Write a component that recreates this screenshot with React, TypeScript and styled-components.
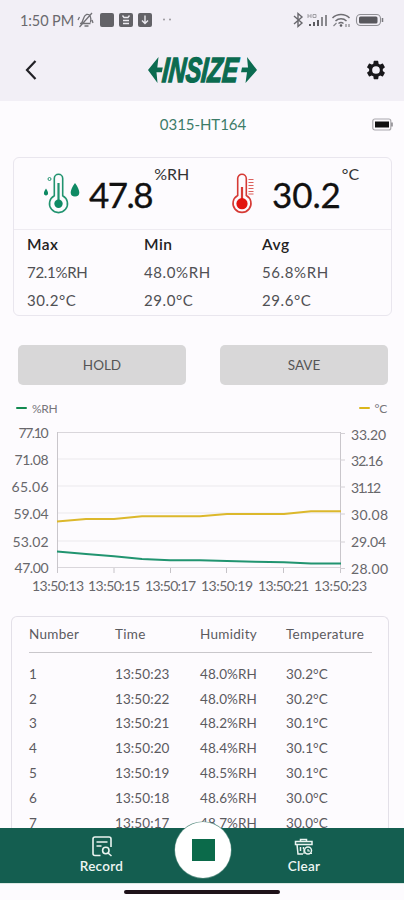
import React from "react";
import styled, { createGlobalStyle } from "styled-components";

const GlobalStyle = createGlobalStyle`
  * { box-sizing: border-box; }
  body { margin: 0; background: #fdfbfe; font-family: Lato, "Noto Sans", sans-serif; }
  button { font: inherit; border: 0; padding: 0; background: none; color: inherit; }
`;

const Screen = styled.div`
  width: 404px;
  height: 900px;
  display: flex;
  flex-direction: column;
  overflow: hidden;
  background: #fdfbfe;
  color: #444;
`;

const TopArea = styled.header`
  height: 101px;
  flex: none;
  background: #f2eff6;
`;

const StatusBar = styled.div`
  height: 40px;
  padding: 0 20px 0 20px;
  display: flex;
  align-items: center;
  justify-content: space-between;
  color: #6a696e;
`;

const StatusGroup = styled.div`
  display: flex;
  align-items: center;
`;

const Clock = styled.span`
  font-size: 14.5px;
  letter-spacing: -0.1px;
  width: 56px;
  white-space: nowrap;
`;

const NavBar = styled.div`
  height: 60px;
  padding: 0 17px 0 21px;
  display: grid;
  grid-template-columns: 20px 1fr 22px;
  align-items: center;
  justify-items: center;
`;

const IconButton = styled.button`
  display: flex;
`;

const LogoSvg = styled.svg`
  overflow: visible;
`;

const DeviceRow = styled.div`
  height: 56px;
  flex: none;
  padding: 0 11px 10px 34px;
  display: grid;
  grid-template-columns: 1fr 21px;
  align-items: center;
`;

const DeviceName = styled.span`
  text-align: center;
  font-size: 15px;
  letter-spacing: -0.05px;
  color: #3c7c68;
`;

const Summary = styled.section`
  flex: none;
  height: 159px;
  margin: 0 12px 0 13px;
  border: 1.5px solid #e9e6ee;
  border-radius: 6px;
`;

const Readings = styled.div`
  height: 72px;
  display: grid;
  grid-template-columns: 188px 1fr;
  border-bottom: 1px solid #eeebf1;
`;

const Reading = styled.div<{ $indent: number }>`
  display: flex;
  align-items: flex-start;
  padding: 14px 0 0 ${(p) => p.$indent}px;
`;

const BigValue = styled.span<{ $before: number; $spacing: number }>`
  margin-left: ${(p) => p.$before}px;
  font-size: 35px;
  line-height: 44px;
  letter-spacing: ${(p) => p.$spacing}px;
  color: #111;
  -webkit-text-stroke: 0.3px #111;
`;

const Unit = styled.span<{ $before: number }>`
  font-size: 16px;
  line-height: 18px;
  margin: -7px 0 0 ${(p) => p.$before}px;
  color: #333;
`;

const Stats = styled.div`
  display: grid;
  grid-template-columns: 117px 118px 1fr;
  padding-left: 13px;
`;

const Stat = styled.div`
  display: flex;
  flex-direction: column;
`;

const StatTitle = styled.span`
  font-size: 15.5px;
  font-weight: 600;
  line-height: 28px;
  letter-spacing: 0.5px;
  color: #222;
`;

const StatValue = styled.span<{ $tight?: boolean }>`
  font-size: 15px;
  line-height: 28px;
  letter-spacing: ${(p) => (p.$tight ? "-0.3px" : "0.6px")};
  color: #505054;
`;

const Actions = styled.div`
  flex: none;
  display: grid;
  grid-template-columns: 168px 168px;
  gap: 34px;
  margin: 29px 0 0 18px;
`;

const ActionButton = styled.button`
  height: 40px;
  border-radius: 5px;
  background: #d8d7d8;
  color: #555;
  font-size: 13.5px;
`;

const Legend = styled.div`
  flex: none;
  height: 20px;
  margin-top: 13px;
  padding: 0 17px 0 16px;
  display: flex;
  justify-content: space-between;
  align-items: center;
`;

const LegendItem = styled.span`
  display: flex;
  align-items: center;
  gap: 5px;
  font-size: 12px;
  letter-spacing: -0.3px;
  color: #77757a;
`;

const Swatch = styled.i<{ $color: string }>`
  width: 11px;
  height: 2px;
  border-radius: 1px;
  background: ${(p) => p.$color};
`;

const ChartSvg = styled.svg`
  flex: none;
  display: block;
  text {
    font-size: 14px;
    fill: #68676b;
  }
`;

const TableCard = styled.section`
  flex: none;
  height: 212px;
  margin: 13px 15px 0 11px;
  padding: 0 16px 0 17px;
  border: 1.5px solid #e3e0e8;
  border-bottom: 0;
  border-radius: 6px 6px 0 0;
  overflow: hidden;
`;

const TableLine = styled.div<{ $head?: boolean }>`
  display: grid;
  grid-template-columns: 86px 85px 86px 1fr;
  align-items: center;
  white-space: nowrap;
  height: ${(p) => (p.$head ? "36px" : "24.8px")};
  padding-bottom: ${(p) => (p.$head ? "1px" : "0")};
  margin-bottom: ${(p) => (p.$head ? "8.5px" : "0")};
  border-bottom: ${(p) => (p.$head ? "1px solid #c9c7cb" : "0")};
  font-size: 13.5px;
  letter-spacing: ${(p) => (p.$head ? "0.3px" : "0.1px")};
  color: #5b5a5e;
`;

const BottomBar = styled.nav`
  flex: none;
  height: 55px;
  display: grid;
  grid-template-columns: 203px 202px;
  background: #145e50;
  position: relative;
`;

const Tab = styled.button`
  display: flex;
  flex-direction: column;
  align-items: center;
  padding-top: 8px;
  color: #eef6f3;
  font-size: 13.5px;
  line-height: 17px;
  letter-spacing: 0.3px;
  font-weight: 600;
  svg { margin-bottom: 1px; }
`;

const StopButton = styled.button`
  position: absolute;
  left: 175px;
  top: -6px;
  width: 56px;
  height: 56px;
  border-radius: 50%;
  background: #fff;
  box-shadow: 0 0 0 0.6px #5e9185;
  display: flex;
  align-items: center;
  justify-content: center;
`;

const StopSquare = styled.i`
  width: 23px;
  height: 22px;
  background: #0b6a4a;
`;

const HomeArea = styled.div`
  flex: 1;
  display: flex;
  justify-content: center;
  padding-top: 6px;
  border-top: 1px solid #dce8e4;
`;

const HomeBar = styled.i`
  width: 156px;
  height: 4px;
  border-radius: 2px;
  background: #1d1019;
`;

const StatusIconsLeft = () => (
  <svg width="98" height="20" viewBox="76 10 98 20" fill="none">
    <g stroke="#727176" strokeWidth="1.3">
      <path d="M80 23.500h10.500M81.500 23c2-2 1.500-7 5-8.500 3.500-.5 5 2 4 8M84.500 26h4M79.500 27 92 13M78 20l1.500-3M92 20l1 3" />
    </g>
    <rect x="100" y="13" width="14" height="14" rx="2" fill="#636267" />
    <rect x="119" y="13" width="14" height="14" rx="2" fill="#636267" />
    <path d="M122.500 15.500l1.500 2h4l1.500-2M123 20.500h6M123 23.500h6" stroke="#eceaf0" strokeWidth="1.300" />
    <rect x="138" y="13" width="14" height="14" rx="2" fill="#636267" />
    <path d="M145 15.500v8M142 20.500l3 3 3-3" stroke="#eceaf0" strokeWidth="1.400" />
    <circle cx="164" cy="19.500" r="1" fill="#99979d" />
    <circle cx="170" cy="19.500" r="1" fill="#99979d" />
  </svg>
);

const StatusIconsRight = () => (
  <svg width="92" height="20" viewBox="292 10 92 20" fill="none">
    <path d="M294 16l8 7-4 3.500v-13l4 3.500-8 7" stroke="#69686d" strokeWidth="1.400" />
    <path d="M308 14v4M308 16h3M311 14v4M313 14.500h3v3h-3z" stroke="#99979d" strokeWidth=".9" />
    <path d="M310 26v-2M314 26v-4M318 26v-6" stroke="#5d5c61" strokeWidth="2" />
    <path d="M322 26v-9M326 26v-11" stroke="#8a898e" strokeWidth="2" />
    <path d="M332.500 18a12 12 0 0 1 17 0M335.500 21a8 8 0 0 1 11 0M338.500 23.500a4 4 0 0 1 5 0" stroke="#6f6e73" strokeWidth="1.500" />
    <circle cx="341" cy="25.500" r="1.300" fill="#5d5c61" />
    <path d="M333.500 26l3-3M346 24v3M349 24v3" stroke="#858389" strokeWidth="1.200" />
    <rect x="356.500" y="14.500" width="24" height="11" rx="4" stroke="#908f94" strokeWidth="1.100" />
    <rect x="359" y="16.500" width="18.500" height="7" rx="1.500" fill="#59585d" />
    <path d="M382.500 18v4" stroke="#7b7a7f" strokeWidth="1.500" />
  </svg>
);

const Logo = () => (
  <LogoSvg width="110" height="44" viewBox="148 48 110 44">
    <path fill="#0b6b50" d="M148 70 158.500 57 157.300 67.500H162.800L161.800 72.300H156.500L157.500 83Z" />
    <path fill="#0b6b50" d="M257 70 247 57 248 67.500H242L241 72.300H247L245.500 83Z" />
    <text
      transform="translate(161.500 82.300) skewX(-5) scale(.7 1)"
      fontFamily="Liberation Sans, Arial, sans-serif"
      fontSize="35"
      fontWeight="700"
      fontStyle="italic"
      textLength="108"
      lengthAdjust="spacingAndGlyphs"
      fill="#0b6b50"
      stroke="#0b6b50"
      strokeWidth="1.500"
    >
      INSIZE
    </text>
  </LogoSvg>
);

const HumidityIcon = () => (
  <svg width="38" height="42" viewBox="42 172 38 42" fill="none" stroke="#21936f">
    <path d="M54.300 195.700V178.500a4.200 4.200 0 0 1 8.400 0V195.700a9 9 0 1 1-8.400 0Z" strokeWidth="1.600" />
    <path d="M58.500 183v18" strokeWidth="2.200" />
    <circle cx="58.500" cy="203.700" r="4.200" fill="#0f8a64" stroke="none" />
    <path d="M75 183c-6 8-5.500 13.500 0 13.500s6-5.500 0-13.500ZM46 188.500c-3 4-2.500 7 0 7s3-3 0-7Z" fill="#0f8a64" stroke="none" />
    <circle cx="49.500" cy="179" r="1.500" strokeWidth="1" />
  </svg>
);

const TemperatureIcon = () => (
  <svg width="26" height="42" viewBox="229 172 26 42" fill="none" stroke="#d63a35">
    <path d="M237.700 195.500V178.500a4.300 4.300 0 0 1 8.600 0V195.500a9 9 0 1 1-8.600 0Z" strokeWidth="1.600" />
    <path d="M242 187v14" strokeWidth="2.200" />
    <circle cx="242" cy="203.700" r="5.600" fill="#e2140f" stroke="none" />
    <path d="M248.500 179.500h5M248.500 182.500h5M248.500 185.500h5M248.500 188.500h5M248.500 191.500h5M248.500 194h5" strokeWidth="1.200" stroke="#db615d" />
  </svg>
);

const GRID_Y = [432.5, 459, 486, 513, 541, 567.5];
const LEFT_TICKS = ["77.10", "71.08", "65.06", "59.04", "53.02", "47.00"];
const RIGHT_TICKS = ["33.20", "32.16", "31.12", "30.08", "29.04", "28.00"];
const LEFT_WIDTHS = [30, 34, 37, 35, 36, 34];
const RIGHT_WIDTHS = [35, 32, 30, 37, 35, 37];
const TIME_TICKS = ["13:50:13", "13:50:15", "13:50:17", "13:50:19", "13:50:21", "13:50:23"];
const TIME_X = [57.5, 114, 170.5, 226.5, 283.5, 340];

const Chart = () => (
  <ChartSvg width="404" height="185" viewBox="0 418 404 185">
    {GRID_Y.map((y, i) => (
      <path key={y} d={`M57 ${y}H340.500`} stroke={i === 0 || i === 5 ? "#d9d6db" : "#ebe9ed"} />
    ))}
    <path d="M57.500 432V573M340.500 432V573" stroke="#c9c6cb" />
    {GRID_Y.map((y) => (
      <path key={y} d={`M340 ${y + 1}h5`} stroke="#d3d0d5" />
    ))}
    {TIME_X.slice(1, 5).map((x) => (
      <path key={x} d={`M${x} 568v5`} stroke="#c6c3c8" />
    ))}
    <g fill="none" strokeWidth="2" strokeLinejoin="round">
      <path stroke="#dcb82c" d="M57 521.500 86 519H114L142 516.200H200L227 514H284L311 511.300H341" />
      <path stroke="#219470" d="M57 551.500 86 554 114 556.200 142 559 170 560.300H200L227 561 255 561.800 284 562.300 311 563.500H341" />
    </g>
    {LEFT_TICKS.map((t, i) => (
      <text key={t} x="48.500" y={GRID_Y[i] + 5.5} textAnchor="end" textLength={LEFT_WIDTHS[i]}>{t}</text>
    ))}
    {RIGHT_TICKS.map((t, i) => (
      <text key={t} x="351" y={434.5 + i * 26.8 + 5} textLength={RIGHT_WIDTHS[i]}>{t}</text>
    ))}
    {TIME_TICKS.map((t, i) => (
      <text key={t} x={[32, 88, 145, 201, 258, 314][i]} y="591" textLength={[52, 52, 51, 52, 51, 53][i]}>{t}</text>
    ))}
  </ChartSvg>
);

const RecordIcon = () => (
  <svg width="22" height="21" viewBox="0 0 22 21" fill="none" stroke="#eaf4f0" strokeWidth="1.600">
    <path d="M9.500 19.500H4a2 2 0 0 1-2-2V3a2 2 0 0 1 2-2h14a2 2 0 0 1 2 2v8M5.500 6h11M5.500 10h5" />
    <circle cx="14.800" cy="14.500" r="3.200" />
    <path d="m17 17 3.500 3" />
  </svg>
);

const ClearIcon = () => (
  <svg width="22" height="21" viewBox="0 0 22 21" fill="none" stroke="#eaf4f0" strokeWidth="1.500">
    <path d="M7.500 5V3.500h6V5M2.500 5.500h16.500v3H2.500zM4 8.500l1 9.500h5M7.500 11v4M10.500 11v2" />
    <circle cx="15" cy="14.500" r="3.500" />
    <path d="M11 18v-5M15 13v2h2M17 17.500h2" strokeWidth="1.200" />
  </svg>
);

const ROWS = [
  ["1", "13:50:23", "48.0%RH", "30.2°C"],
  ["2", "13:50:22", "48.0%RH", "30.2°C"],
  ["3", "13:50:21", "48.2%RH", "30.1°C"],
  ["4", "13:50:20", "48.4%RH", "30.1°C"],
  ["5", "13:50:19", "48.5%RH", "30.1°C"],
  ["6", "13:50:18", "48.6%RH", "30.0°C"],
  ["7", "13:50:17", "48.7%RH", "30.0°C"],
];

const STATS = [
  { title: "Max", humidity: "72.1%RH", temperature: "30.2°C", tight: true },
  { title: "Min", humidity: "48.0%RH", temperature: "29.0°C", tight: false },
  { title: "Avg", humidity: "56.8%RH", temperature: "29.6°C", tight: false },
];

export default function App() {
  return (
    <Screen>
      <GlobalStyle />
      <TopArea>
        <StatusBar>
          <StatusGroup>
            <Clock>1:50 PM</Clock>
            <StatusIconsLeft />
          </StatusGroup>
          <StatusIconsRight />
        </StatusBar>
        <NavBar>
          <IconButton aria-label="Back">
            <svg width="16" height="22" viewBox="0 0 16 22" fill="none" stroke="#222126" strokeWidth="2.200">
              <path d="M12.500 2 4 11l8.500 9" />
            </svg>
          </IconButton>
          <Logo />
          <IconButton aria-label="Settings">
            <svg width="22" height="22" viewBox="0 0 24 24" fill="#18171a">
              <path d="M19.400 13c.04-.3.060-.600.060-1s-.02-.700-.060-1l2.100-1.650a.5.5 0 0 0 .12-.640l-2-3.460a.5.5 0 0 0-.610-.22l-2.490 1a7.300 7.300 0 0 0-1.690-.980L14.450 2.400A.5.5 0 0 0 13.960 2h-4a.5.5 0 0 0-.490.420L9.090 5.050c-.610.250-1.170.590-1.690.980l-2.490-1a.5.5 0 0 0-.610.220l-2 3.460a.5.5 0 0 0 .120.640L4.530 11c-.040.300-.070.650-.070 1s.030.700.070 1l-2.110 1.650a.5.5 0 0 0-.120.640l2 3.460c.120.220.390.300.610.220l2.490-1c.520.400 1.080.730 1.690.980l.380 2.650c.030.240.240.400.490.400h4c.250 0 .460-.160.490-.400l.380-2.650c.610-.250 1.170-.590 1.690-.980l2.490 1c.220.080.490 0 .610-.220l2-3.460a.5.5 0 0 0-.120-.640ZM12 16.200a4.200 4.200 0 1 1 0-8.400 4.200 4.200 0 0 1 0 8.400Z" />
            </svg>
          </IconButton>
        </NavBar>
      </TopArea>

      <DeviceRow>
        <DeviceName>0315-HT164</DeviceName>
        <svg width="21" height="13" viewBox="0 0 21 13" fill="none">
          <rect x=".8" y="1" width="18" height="11" rx="2" stroke="#aaa8ad" strokeWidth="1.200" />
          <rect x="3" y="3.500" width="14" height="6" fill="#111" />
          <path d="M20 4.500v4" stroke="#77757a" strokeWidth="1.300" />
        </svg>
      </DeviceRow>

      <Summary>
        <Readings>
          <Reading $indent={28}>
            <HumidityIcon />
            <BigValue $before={9} $spacing={-1.5}>47.8</BigValue>
            <Unit $before={2}>%RH</Unit>
          </Reading>
          <Reading $indent={27}>
            <TemperatureIcon />
            <BigValue $before={17} $spacing={-0.1}>30.2</BigValue>
            <Unit $before={1}>°C</Unit>
          </Reading>
        </Readings>
        <Stats>
          {STATS.map((s) => (
            <Stat key={s.title}>
              <StatTitle>{s.title}</StatTitle>
              <StatValue $tight={s.tight}>{s.humidity}</StatValue>
              <StatValue>{s.temperature}</StatValue>
            </Stat>
          ))}
        </Stats>
      </Summary>

      <Actions>
        <ActionButton>HOLD</ActionButton>
        <ActionButton>SAVE</ActionButton>
      </Actions>

      <Legend>
        <LegendItem><Swatch $color="#128a50" />%RH</LegendItem>
        <LegendItem><Swatch $color="#dbb61c" />°C</LegendItem>
      </Legend>

      <Chart />

      <TableCard>
        <TableLine $head>
          <span>Number</span><span>Time</span><span>Humidity</span><span>Temperature</span>
        </TableLine>
        {ROWS.map((row) => (
          <TableLine key={row[0]}>
            {row.map((cell) => <span key={cell}>{cell}</span>)}
          </TableLine>
        ))}
      </TableCard>

      <BottomBar>
        <Tab><RecordIcon />Record</Tab>
        <Tab><ClearIcon />Clear</Tab>
        <StopButton aria-label="Stop"><StopSquare /></StopButton>
      </BottomBar>
      <HomeArea><HomeBar /></HomeArea>
    </Screen>
  );
}
